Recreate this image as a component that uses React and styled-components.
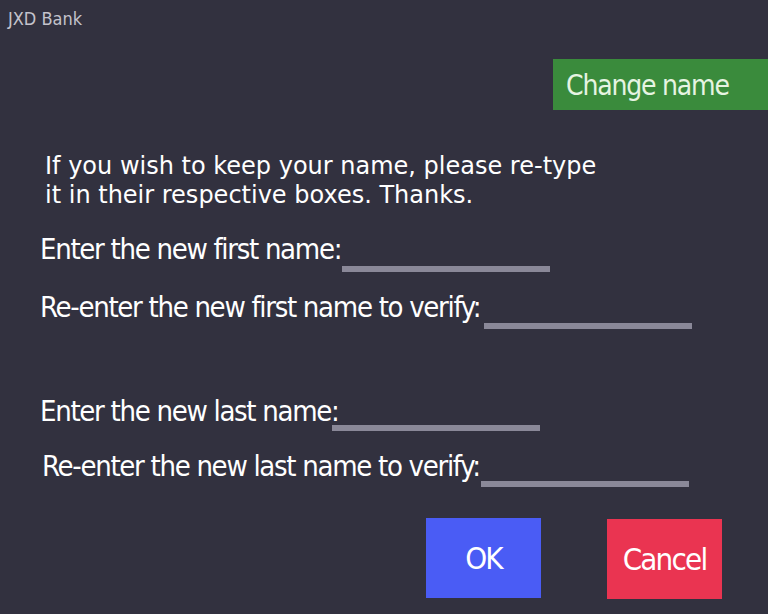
import React from "react";
import styled, { createGlobalStyle } from "styled-components";

const Global = createGlobalStyle`
  html, body { margin: 0; padding: 0; background: #32313f; }
  #root { width: 768px; height: 614px; }
`;

const Screen = styled.div`
  width: 768px;
  height: 614px;
  box-sizing: border-box;
  background: #32313f;
  font-family: "DejaVu Sans Condensed", "DejaVu Sans", sans-serif;
  font-stretch: condensed;
  color: #ffffff;
  display: flex;
  flex-direction: column;
  overflow: hidden;
`;

const Brand = styled.div`
  font-size: 18px;
  color: #c4c3cc;
  padding: 8px 0 0 8px;
  height: 22px;
  line-height: 22px;
`;

const TitleBar = styled.div`
  display: flex;
  justify-content: flex-end;
  margin-top: 29px;
`;

const TitleButton = styled.div`
  width: 215px;
  height: 51px;
  box-sizing: border-box;
  padding-left: 13px;
  padding-top: 3px;
  background: #3a8b3c;
  color: #e6f4e2;
  font-size: 28px;
  letter-spacing: -1.2px;
  line-height: 48px;
`;

const Message = styled.p`
  margin: 42px 0 0 45px;
  font-family: "DejaVu Sans", sans-serif;
  font-stretch: normal;
  font-size: 24px;
  line-height: 29px;
  color: #ffffff;
`;

const Form = styled.div`
  display: flex;
  flex-direction: column;
  margin-top: 16px;
`;

const Group = styled.div`
  display: flex;
  flex-direction: column;
  gap: ${(p) => p.$gap}px;
  margin-top: ${(p) => p.$top}px;
`;

const Row = styled.div`
  display: flex;
  align-items: flex-end;
  padding-left: ${(p) => p.$indent}px;
  height: 40px;
`;

const Label = styled.span`
  font-size: 29px;
  letter-spacing: -1.3px;
  line-height: 34px;
  color: #ffffff;
`;

const Field = styled.div`
  width: 208px;
  height: 6px;
  background: #8a8898;
  margin-left: ${(p) => p.$gap}px;
  margin-bottom: ${(p) => p.$drop}px;
  flex: none;
`;

const Actions = styled.div`
  display: flex;
  margin-top: 35px;
  padding-left: 426px;
  gap: 66px;
  align-items: flex-start;
`;

const ActionButton = styled.div`
  width: 115px;
  height: 80px;
  margin-top: ${(p) => p.$top}px;
  background: ${(p) => p.$bg};
  color: #ffffff;
  font-size: 31px;
  letter-spacing: -1.8px;
  display: flex;
  align-items: center;
  justify-content: center;
  box-sizing: border-box;
`;

export default function App() {
  return (
    <>
      <Global />
      <Screen>
        <Brand>JXD Bank</Brand>
        <TitleBar>
          <TitleButton>Change name</TitleButton>
        </TitleBar>
        <Message>
          If you wish to keep your name, please re-type
          <br />
          it in their respective boxes. Thanks.
        </Message>
        <Form>
          <Group $gap={18} $top={0}>
            <Row $indent={40}>
              <Label>Enter the new first name:</Label>
              <Field $gap={1} $drop={-6} />
            </Row>
            <Row $indent={40}>
              <Label>Re-enter the new first name to verify:</Label>
              <Field $gap={4} $drop={-5} />
            </Row>
          </Group>
          <Group $gap={15} $top={64}>
            <Row $indent={40}>
              <Label>Enter the new last name:</Label>
              <Field $gap={-7} $drop={-3} />
            </Row>
            <Row $indent={42}>
              <Label>Re-enter the new last name to verify:</Label>
              <Field $gap={1} $drop={-4} />
            </Row>
          </Group>
        </Form>
        <Actions>
          <ActionButton $bg="#4a5cf5" $top={0}>OK</ActionButton>
          <ActionButton $bg="#ea3451" $top={1}>Cancel</ActionButton>
        </Actions>
      </Screen>
    </>
  );
}
